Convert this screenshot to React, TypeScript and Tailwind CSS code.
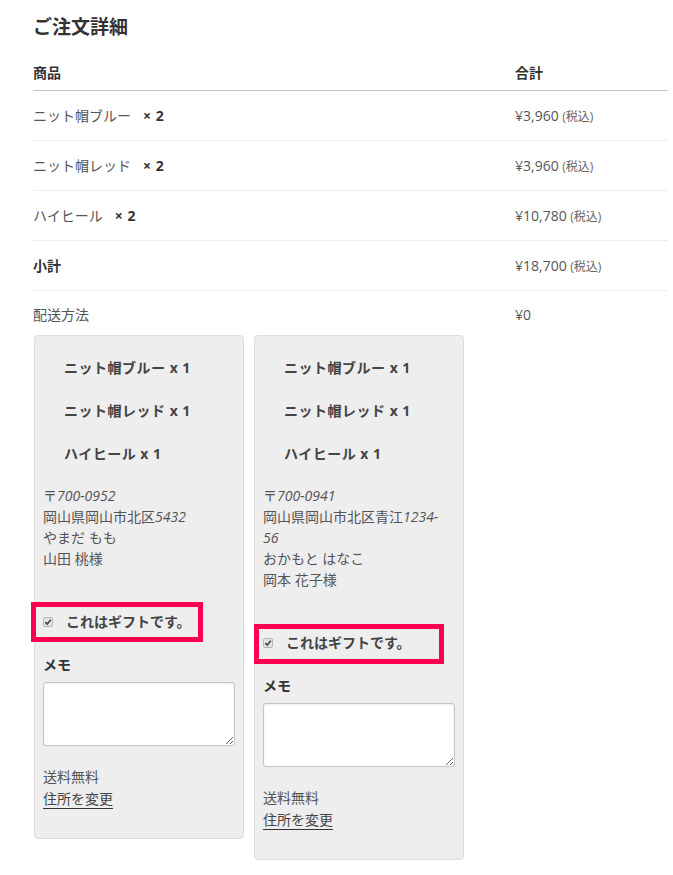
import React from 'react';

type Line = { name: string; qty: number; price: string };

const lines: Line[] = [
  { name: 'ニット帽ブルー', qty: 2, price: '¥3,960' },
  { name: 'ニット帽レッド', qty: 2, price: '¥3,960' },
  { name: 'ハイヒール', qty: 2, price: '¥10,780' },
];

type Pkg = {
  items: string[];
  zip: string;
  addr: string;
  addrNum: React.ReactNode;
  kana: string;
  name: string;
  boxClass: string;
};

const packages: Pkg[] = [
  {
    items: ['ニット帽ブルー', 'ニット帽レッド', 'ハイヒール'],
    zip: '700-0952',
    addr: '岡山県岡山市北区',
    addrNum: <i>5432</i>,
    kana: 'やまだ もも',
    name: '山田 桃様',
    boxClass: '-left-[12px] w-[172px] -top-[10px]',
  },
  {
    items: ['ニット帽ブルー', 'ニット帽レッド', 'ハイヒール'],
    zip: '700-0941',
    addr: '岡山県岡山市北区青江',
    addrNum: (
      <>
        <i>1234-</i>
        <br />
        <i>56</i>
      </>
    ),
    kana: 'おかもと はなこ',
    name: '岡本 花子様',
    boxClass: '-left-[9px] w-[190px] -top-[9px]',
  },
];

const Tax = () => <span className="text-[12px] text-[#666]">(税込)</span>;

// small greyed-out checked box, like the disabled native one
const MiniCheck = () => (
  <span className="flex h-[10px] w-[10px] shrink-0 items-center justify-center rounded-[2px] border border-[#b5b5b5] bg-[#e4e4e4]">
    <svg width="8" height="8" viewBox="0 0 8 8">
      <path d="M1.3 4.2 L3.2 6 L6.8 1.8" fill="none" stroke="#444" strokeWidth="1.6" />
    </svg>
  </span>
);

const PackageCard = ({ pkg }: { pkg: Pkg }) => (
  <div className="w-[210px] self-start rounded-[4px] border border-[#dcdcdc] bg-[#eeeeee] px-[8px] pb-[28px]">
    <ul className="flex flex-col gap-[23px] pl-[21px] pt-[22px]">
      {pkg.items.map((it) => (
        <li key={it} className="text-[14px] font-bold leading-[20px] tracking-[0.5px] text-[#444]">
          {it} x 1
        </li>
      ))}
    </ul>

    <div className="mt-[21px] text-[14px] leading-[21px] text-[#555]">
      <div>
        〒<i>{pkg.zip}</i>
      </div>
      <div>
        {pkg.addr}
        {pkg.addrNum}
      </div>
      <div>{pkg.kana}</div>
      <div>{pkg.name}</div>
    </div>

    <div className="relative mt-[43px] flex h-[20px] items-center">
      <MiniCheck />
      <span className="ml-[13px] text-[14px] font-semibold leading-[20px] text-[#444]">
        これはギフトです。
      </span>
      <span
        className={`pointer-events-none absolute h-[40px] border-[5px] border-[#ff0050] ${pkg.boxClass}`}
      />
    </div>

    <div className="mt-[23px] text-[14px] font-bold leading-[20px] text-[#333]">メモ</div>
    <textarea className="mt-[7px] block h-[64px] w-full rounded-[3px] border border-[#c4c4c4] bg-white shadow-[inset_0_1px_2px_rgba(0,0,0,0.08)] outline-none" />

    <div className="mt-[20px] text-[14px] leading-[22px] text-[#555]">送料無料</div>
    <div className="leading-[22px]">
      <a className="inline-block border-b border-[#333] text-[14px] leading-[19px] text-[#444]">
        住所を変更
      </a>
    </div>
  </div>
);

export default function App() {
  return (
    <div
      className="min-h-screen bg-white text-[14px] text-[#555]"
      style={{ fontFamily: '"Open Sans", "Noto Sans CJK JP", sans-serif' }}
    >
      <div className="pl-[33px] pr-[5px] pt-[13px]">
        <h2 className="text-[19px] font-bold leading-[28px] text-[#333]">ご注文詳細</h2>

        <div className="mt-[13px] flex h-[37px] items-center border-b border-[#c2c2c2] font-bold text-[#333]">
          <div className="w-[482px]">商品</div>
          <div>合計</div>
        </div>

        {lines.map((l) => (
          <div key={l.name} className="flex h-[50px] items-center border-b border-[#ededed]">
            <div className="w-[482px]">
              {l.name}
              <strong className="ml-[12px] font-bold tracking-[0.5px] text-[#333]">× {l.qty}</strong>
            </div>
            <div>
              {l.price} <Tax />
            </div>
          </div>
        ))}

        <div className="flex h-[50px] items-center border-b border-[#ededed]">
          <div className="w-[482px] font-bold text-[#333]">小計</div>
          <div>
            ¥18,700 <Tax />
          </div>
        </div>

        <div className="flex pt-[14px] leading-[20px]">
          <div className="w-[482px]">配送方法</div>
          <div>¥0</div>
        </div>

        <div className="ml-px mt-[10px] flex gap-[10px] pb-[15px]">
          {packages.map((p) => (
            <PackageCard key={p.zip} pkg={p} />
          ))}
        </div>
      </div>
    </div>
  );
}
